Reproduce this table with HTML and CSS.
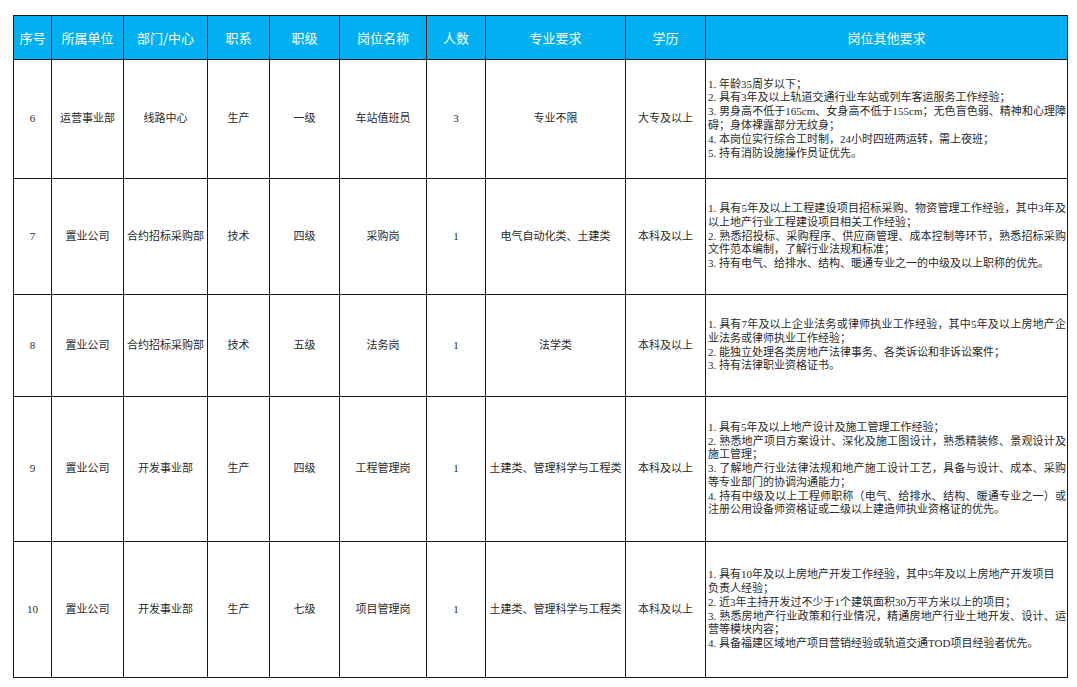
FILE: index.html
```html
<!DOCTYPE html>
<html lang="zh-CN">
<head>
<meta charset="utf-8">
<title>岗位表</title>
<link rel="stylesheet" href="styles.css">
</head>
<body>
<table class="jobs">
  <colgroup>
    <col class="c1"><col class="c2"><col class="c3"><col class="c4"><col class="c5">
    <col class="c6"><col class="c7"><col class="c8"><col class="c9"><col class="c10">
  </colgroup>
  <thead>
    <tr class="head">
      <th>序号</th><th>所属单位</th><th>部门/中心</th><th>职系</th><th>职级</th>
      <th>岗位名称</th><th>人数</th><th>专业要求</th><th>学历</th><th>岗位其他要求</th>
    </tr>
  </thead>
  <tbody>
    <tr class="r6">
      <td class="num">6</td><td>运营事业部</td><td>线路中心</td><td>生产</td><td>一级</td>
      <td>车站值班员</td><td class="num">3</td><td>专业不限</td><td>大专及以上</td>
      <td class="req">
        <span class="ln">1. 年龄35周岁以下；</span>
        <span class="ln">2. 具有3年及以上轨道交通行业车站或列车客运服务工作经验；</span>
        <span class="ln j">3. 男身高不低于165cm、女身高不低于155cm；无色盲色弱、精神和心理障</span>
        <span class="ln">碍；身体裸露部分无纹身；</span>
        <span class="ln">4. 本岗位实行综合工时制，24小时四班两运转，需上夜班；</span>
        <span class="ln">5. 持有消防设施操作员证优先。</span>
      </td>
    </tr>
    <tr class="r7">
      <td class="num">7</td><td>置业公司</td><td>合约招标采购部</td><td>技术</td><td>四级</td>
      <td>采购岗</td><td class="num">1</td><td>电气自动化类、土建类</td><td>本科及以上</td>
      <td class="req">
        <span class="ln j">1. 具有5年及以上工程建设项目招标采购、物资管理工作经验，其中3年及</span>
        <span class="ln">以上地产行业工程建设项目相关工作经验；</span>
        <span class="ln j">2. 熟悉招投标、采购程序、供应商管理、成本控制等环节，熟悉招标采购</span>
        <span class="ln">文件范本编制，了解行业法规和标准；</span>
        <span class="ln">3. 持有电气、给排水、结构、暖通专业之一的中级及以上职称的优先。</span>
      </td>
    </tr>
    <tr class="r8">
      <td class="num">8</td><td>置业公司</td><td>合约招标采购部</td><td>技术</td><td>五级</td>
      <td>法务岗</td><td class="num">1</td><td>法学类</td><td>本科及以上</td>
      <td class="req">
        <span class="ln j">1. 具有7年及以上企业法务或律师执业工作经验，其中5年及以上房地产企</span>
        <span class="ln">业法务或律师执业工作经验；</span>
        <span class="ln">2. 能独立处理各类房地产法律事务、各类诉讼和非诉讼案件；</span>
        <span class="ln">3. 持有法律职业资格证书。</span>
      </td>
    </tr>
    <tr class="r9">
      <td class="num">9</td><td>置业公司</td><td>开发事业部</td><td>生产</td><td>四级</td>
      <td>工程管理岗</td><td class="num">1</td><td>土建类、管理科学与工程类</td><td>本科及以上</td>
      <td class="req">
        <span class="ln">1. 具有5年及以上地产设计及施工管理工作经验；</span>
        <span class="ln j">2. 熟悉地产项目方案设计、深化及施工图设计，熟悉精装修、景观设计及</span>
        <span class="ln">施工管理；</span>
        <span class="ln j">3. 了解地产行业法律法规和地产施工设计工艺，具备与设计、成本、采购</span>
        <span class="ln">等专业部门的协调沟通能力；</span>
        <span class="ln j">4. 持有中级及以上工程师职称（电气、给排水、结构、暖通专业之一）或</span>
        <span class="ln">注册公用设备师资格证或二级以上建造师执业资格证的优先。</span>
      </td>
    </tr>
    <tr class="r10">
      <td class="num">10</td><td>置业公司</td><td>开发事业部</td><td>生产</td><td>七级</td>
      <td>项目管理岗</td><td class="num">1</td><td>土建类、管理科学与工程类</td><td>本科及以上</td>
      <td class="req">
        <span class="ln">1. 具有10年及以上房地产开发工作经验，其中5年及以上房地产开发项目</span>
        <span class="ln">负责人经验；</span>
        <span class="ln">2. 近3年主持开发过不少于1个建筑面积30万平方米以上的项目；</span>
        <span class="ln j">3. 熟悉房地产行业政策和行业情况，精通房地产行业土地开发、设计、运</span>
        <span class="ln">营等模块内容；</span>
        <span class="ln">4. 具备福建区域地产项目营销经验或轨道交通TOD项目经验者优先。</span>
      </td>
    </tr>
  </tbody>
</table>
</body>
</html>
```

FILE: styles.css
```css
html, body {
  margin: 0;
  padding: 0;
  background: #ffffff;
}

body {
  padding: 15px 0 0 13px;
  font-family: "Liberation Serif", "Noto Sans CJK SC", serif;
}

.jobs {
  border-collapse: collapse;
  table-layout: fixed;
  width: 1054px;
}

.c1 { width: 38px; }
.c2 { width: 72px; }
.c3 { width: 84px; }
.c4 { width: 62px; }
.c5 { width: 70px; }
.c6 { width: 87px; }
.c7 { width: 59px; }
.c8 { width: 140px; }
.c9 { width: 80px; }
.c10 { width: 362px; }

.jobs th,
.jobs td {
  border: 1px solid #1a1a1a;
  padding: 0;
  text-align: center;
  vertical-align: middle;
  overflow: hidden;
}

.head {
  height: 44px;
}

.head th {
  background: #00b0f0;
  color: #ffffff;
  font-family: "Noto Sans CJK SC", sans-serif;
  font-size: 13px;
  font-weight: 400;
  white-space: nowrap;
}

.jobs td {
  font-size: 11px;
  font-weight: 400;
  color: #2a2a2a;
  line-height: 13.8px;
  white-space: nowrap;
}

.jobs td.num {
  font-size: 11px;
}

.r6 { height: 119px; }
.r7 { height: 116px; }
.r8 { height: 102px; }
.r9 { height: 145px; }
.r10 { height: 136px; }

.jobs td.req {
  text-align: left;
  padding: 0 1px 0 2px;
  white-space: normal;
}

.ln {
  display: block;
  white-space: nowrap;
}

.ln.j {
  white-space: normal;
  text-align: justify;
  text-align-last: justify;
}
```
